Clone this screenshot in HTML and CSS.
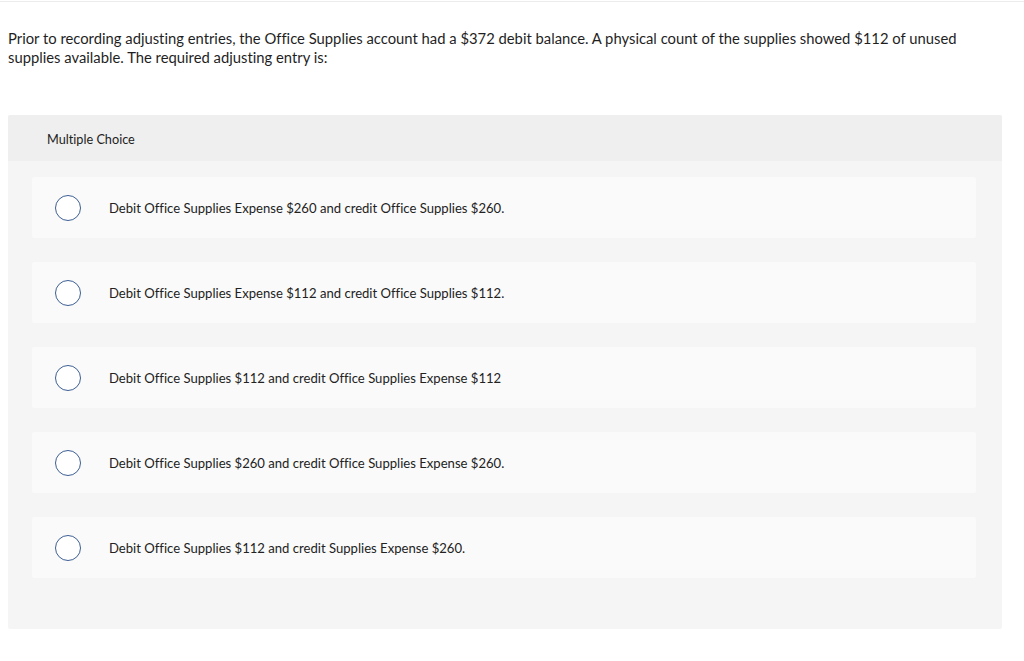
FILE: index.html
```html
<!DOCTYPE html>
<html>
<head>
<meta charset="utf-8">
<link rel="stylesheet" href="styles.css">
</head>
<body>
<div class="topline"></div>
<p class="question">Prior to recording adjusting entries, the Office Supplies account had a $372 debit balance. A physical count of the supplies showed $112 of unused supplies available. The required adjusting entry is:</p>
<div class="panel">
  <div class="panel-head">Multiple Choice</div>
  <div class="panel-body">
    <div class="option"><span class="radio"></span><span class="label">Debit Office Supplies Expense $260 and credit Office Supplies $260.</span></div>
    <div class="option"><span class="radio"></span><span class="label">Debit Office Supplies Expense $112 and credit Office Supplies $112.</span></div>
    <div class="option"><span class="radio"></span><span class="label">Debit Office Supplies $112 and credit Office Supplies Expense $112</span></div>
    <div class="option"><span class="radio"></span><span class="label">Debit Office Supplies $260 and credit Office Supplies Expense $260.</span></div>
    <div class="option"><span class="radio"></span><span class="label">Debit Office Supplies $112 and credit Supplies Expense $260.</span></div>
  </div>
</div>
</body>
</html>
```

FILE: styles.css
```css
html, body { margin: 0; padding: 0; background: #fff; }
body {
  font-family: "Lato", "Open Sans", sans-serif;
  color: #222;
  font-variant-ligatures: none;
}
.topline {
  height: 1px;
  margin-top: 1px;
  background: #ececec;
}
.question {
  margin: 27px 8px 0 8px;
  font-size: 14.8px;
  line-height: 19px;
  color: #1f1f1f;
  padding-right: 40px;
}
.panel {
  margin: 48px 22px 0 8px;
  background: #f5f5f5;
  border-radius: 2px;
}
.panel-head {
  height: 46px;
  background: #efefef;
  display: flex;
  align-items: center;
  padding: 2px 0 0 39px;
  box-sizing: border-box;
  font-size: 12.7px;
  color: #222;
  border-radius: 2px 2px 0 0;
}
.panel-body {
  padding: 16px 26px 51px 24px;
  display: flex;
  flex-direction: column;
  gap: 24px;
}
.option {
  height: 61px;
  background: #fafafa;
  display: flex;
  align-items: center;
  border-radius: 2px;
}
.radio {
  width: 24px;
  height: 24px;
  border: 1px solid #3d5f94;
  border-radius: 50%;
  margin-left: 23px;
  flex: none;
  background: #fff;
}
.label {
  margin-left: 28px;
  padding-top: 1px;
  font-size: 13.1px;
  color: #222;
}
```
